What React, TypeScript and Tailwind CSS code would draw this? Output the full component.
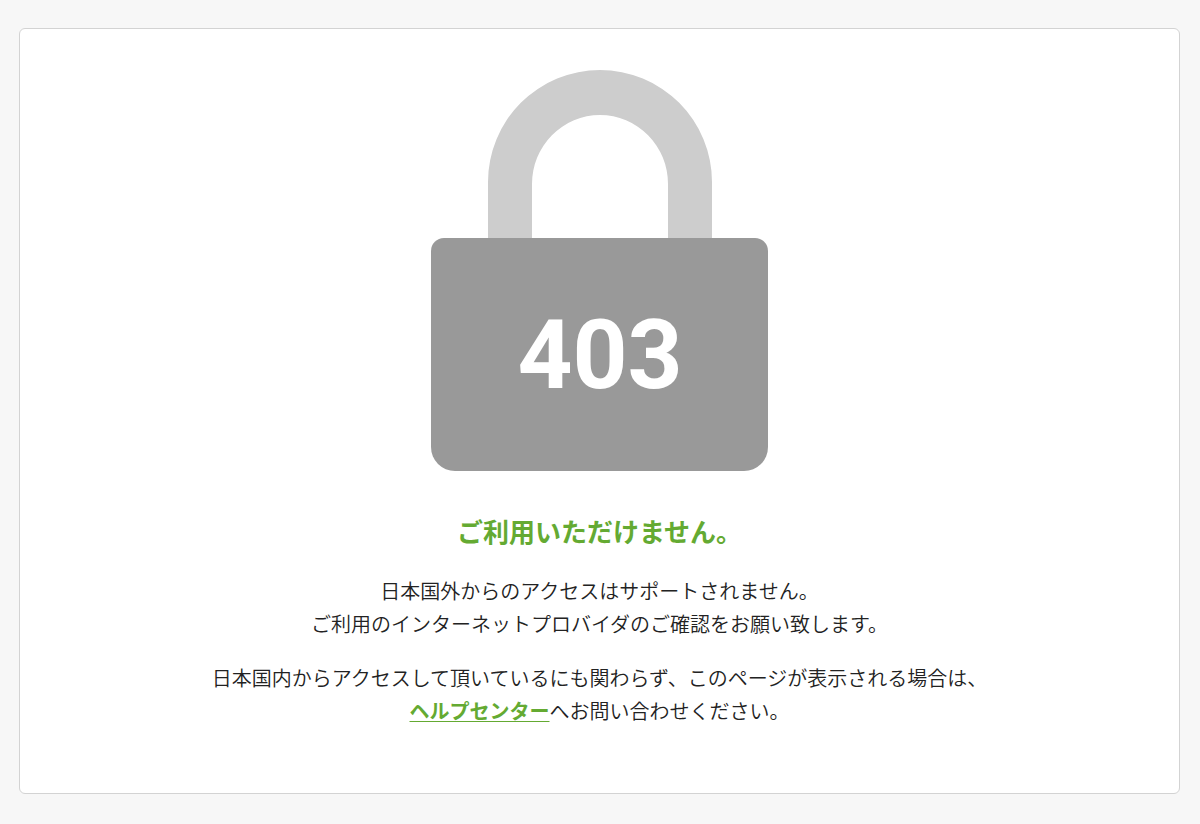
function PadlockGraphic() {
  return (
    <svg
      viewBox="0 0 337 401"
      className="mx-auto block h-[401px] w-[337px] max-w-full"
      role="img"
      aria-label="403"
    >
      <path
        d="M57 170V112A112 112 0 0 1 281 112V170H237V114A68 69 0 0 0 101 114V170Z"
        fill="#cdcdcd"
      />
      <path
        d="M13 168H324A13 13 0 0 1 337 181V377A24 24 0 0 1 313 401H24A24 24 0 0 1 0 377V181A13 13 0 0 1 13 168Z"
        fill="#999999"
      />
      <text
        x="169"
        y="318"
        textAnchor="middle"
        fill="#ffffff"
        className="font-['Roboto',sans-serif] text-[96px] font-bold"
      >
        403
      </text>
    </svg>
  );
}

export default function App() {
  return (
    <div className="min-h-screen bg-[#f7f7f7] pt-[28px] pr-[20px] pb-[30px] pl-[19px] font-['Noto_Sans_CJK_JP',sans-serif]">
      <main className="rounded-[6px] border border-[#d3d3d3] bg-white px-5 pt-[41px] pb-[66px] text-center text-[#222222]">
        <PadlockGraphic />
        <h1 className="mt-[39px] text-[26px] leading-[42px] font-bold text-[#64aa32]">
          ご利用いただけません。
        </h1>
        <div className="mt-[22px] flex flex-col gap-[21px] text-[20px] leading-[33px] font-[350]">
          <p>
            日本国外からのアクセスはサポートされません。
            <br />
            ご利用のインターネットプロバイダのご確認をお願い致します。
          </p>
          <p>
            日本国内からアクセスして頂いているにも関わらず、このページが表示される場合は、
            <br />
            <a
              href="#help"
              className="font-bold text-[#64aa32] underline decoration-[#64aa32] decoration-1 underline-offset-2"
            >
              ヘルプセンター
            </a>
            へお問い合わせください。
          </p>
        </div>
      </main>
    </div>
  );
}
